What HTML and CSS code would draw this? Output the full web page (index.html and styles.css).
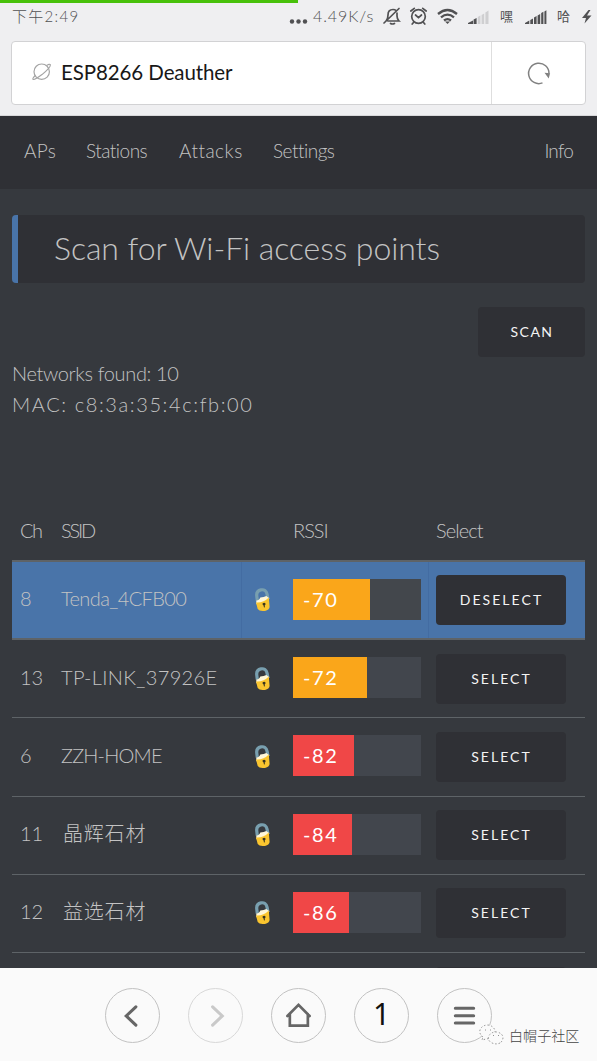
FILE: index.html
```html
<!DOCTYPE html>
<html lang="zh-CN">
<head>
<meta charset="utf-8">
<title>ESP8266 Deauther</title>
<link rel="stylesheet" href="styles.css">
</head>
<body>
<svg class="defs" width="0" height="0">
  <symbol id="lock" viewBox="0 0 18 24">
    <path d="M3.300 12.600 2.800 8.200C2.200 4.200 4 2.500 7 1.900s5.400.8 6.100 4.500l.9 4.600" fill="none" stroke="#789faf" stroke-width="3.200"/>
    <path d="M2.300 12.500q3-.1 4-3.100 3.700-.5 6-1.500l3 2.300-1 3-12 3z" fill="#fff7d8"/>
    <path d="M2 14.500q7.500.5 12.800-5l.8 9.500q-.3 3-4.600 3.900-5.500.9-7.300-1.900z" fill="#fac52f"/>
    <path d="M8.500 15.500q2-1.300 3 .1.400 1.200-.8 1.800l.2 2-1-.2-.3-1.700q-1.200-.7-1.100-2z" fill="#37331f"/>
  </symbol>
</svg>
<div class="progress"></div>
<header class="browser">
  <div class="status">
    <span class="clock">下午2:49</span>
    <span class="speed">4.49K/s</span>
    <svg class="status-icons" viewBox="280 0 317 34" width="317" height="34">
      <g fill="#515153"><circle cx="292" cy="21.500" r="2.200"/><circle cx="298.500" cy="21.500" r="2.200"/><circle cx="305" cy="21.500" r="2.200"/></g>
      <g fill="none" stroke="#515153" stroke-width="1.700" stroke-linecap="round">
        <path d="M384 23 399 8.500M386 21q2-2 2-6 0-5.500 5-5.500 2 0 3 1M397 13v3q0 3 2 5h-11M390.500 23.500q1.800 1 4 0"/>
        <circle cx="418.500" cy="16.500" r="6.800"/><path d="m415.500 15 3 2.700 3-2.700M410.800 11l3.500-2.700M426.200 11l-3.500-2.700M413.500 22.500l-1.300 1.500M423.500 22.500l1.300 1.500"/>
      </g>
      <g fill="none" stroke="#515153" stroke-width="2.300"><path d="M438 14q9.500-8 19 0M441 17.300q6.500-5.400 13 0M444 20.500q3.500-2.800 7 0"/></g>
      <path d="m445 21.500h5l-2.500 2.500z" fill="#515153"/>
      <g fill="#515153"><path d="M468 24v-1l5-2.500V24zM473.600 19.500l3-1.500v6h-3z"/></g>
      <g fill="#cfcfd1"><path d="M477.800 17l2.600-1.500V24h-2.600zM481.600 15l2.600-1.500V24h-2.600zM485.400 12.500l3.100-2V24h-3.100z"/></g>
      <g fill="#515153"><path d="M525 24v-1l4.300-2.500V24zM530.300 20l2.700-1.500V24h-2.700zM534 17.500l2.600-1.500v8H534zM537.600 15.500l2.600-1.500v10h-2.600zM541.200 13l2.200-1.300V24h-2.200zM544.400 11.500l2-1.300V24h-2zM588.500 10l-6.500 8h4l-1.500 5.500 7-8h-4.500l3.500-5.500z"/></g>
    </svg>
    <span class="sim sim-one">嘿</span>
    <span class="sim sim-two">哈</span>
  </div>
  <div class="urlbar">
    <div class="address">
      <svg width="20" height="20" viewBox="0 0 20 20" fill="none" stroke="#a4a4a4" stroke-width="1.200"><circle cx="9.700" cy="9.700" r="7.700"/><path d="M3.300 13.500Q.2 16.300 1 17.300q1.500 1 9-4.700 9-7.500 8.300-9.900-.8-1.200-3.700.8"/></svg>
      <span class="page-title">ESP8266 Deauther</span>
    </div>
    <div class="reload">
      <svg width="26" height="26" viewBox="0 0 26 26"><path d="M16.500 22.900A10.200 10.200 0 1 1 23 13.500" fill="none" stroke="#818181" stroke-width="1.500"/><path d="m18.500 12.800 5.600.4-1.400 5.300z" fill="#818181"/></svg>
    </div>
  </div>
</header>
<nav class="nav">
  <a class="n1">APs</a><a class="n2">Stations</a><a class="n3">Attacks</a><a class="n4">Settings</a><a class="info">Info</a>
</nav>
<main class="content">
  <h1><span>Scan for Wi-Fi access points</span></h1>
  <div class="scan-row"><button class="btn scan">SCAN</button></div>
  <div class="summary"><div class="found">Networks found: 10</div><div class="mac">MAC: c8:3a:35:4c:fb:00</div></div>
  <section class="table">
    <div class="row head"><span class="h-ch">Ch</span><span class="h-ssid">SSID</span><span></span><span class="h-rssi">RSSI</span><span class="h-select">Select</span></div>
    <div class="row selected"><span class="ch">8</span><span class="s1">Tenda_4CFB00</span><svg class="lock"><use href="#lock"/></svg><div class="meter"><div class="level warn" style="width:60%">-70</div></div><button class="btn deselect">DESELECT</button></div>
    <div class="row"><span class="ch">13</span><span class="s2">TP-LINK_37926E</span><svg class="lock"><use href="#lock"/></svg><div class="meter"><div class="level warn" style="width:58%">-72</div></div><button class="btn">SELECT</button></div>
    <div class="row"><span class="ch">6</span><span class="s3">ZZH-HOME</span><svg class="lock"><use href="#lock"/></svg><div class="meter"><div class="level weak" style="width:48%">-82</div></div><button class="btn">SELECT</button></div>
    <div class="row"><span class="ch">11</span><span class="cjk">晶辉石材</span><svg class="lock"><use href="#lock"/></svg><div class="meter"><div class="level weak" style="width:46%">-84</div></div><button class="btn">SELECT</button></div>
    <div class="row"><span class="ch">12</span><span class="cjk">益选石材</span><svg class="lock"><use href="#lock"/></svg><div class="meter"><div class="level weak" style="width:44%">-86</div></div><button class="btn">SELECT</button></div>
    <div class="row"><span></span><span></span><span></span><span></span><button class="btn" aria-label="Select"></button></div>
  </section>
</main>
<footer class="toolbar">
  <div class="circle"><svg viewBox="0 0 55 55"><path d="M31 18.500 21 28l10 9.500"/></svg></div>
  <div class="circle disabled"><svg viewBox="0 0 55 55"><path d="m24.500 18.500 10 9.500-10 9.500"/></svg></div>
  <div class="circle"><svg viewBox="0 0 55 55"><path class="thin" d="m16 28 11.500-11.500L39 28M18.500 26v12h18.700V26"/></svg></div>
  <div class="circle tabs">1</div>
  <div class="circle"><svg viewBox="0 0 55 55"><path d="M18 20h19M18 27.700h19M18 35.300h19"/></svg></div>
  <div class="watermark">
    <svg width="26" height="22" viewBox="0 0 26 22" fill="#fafafa" stroke="#777" stroke-width=".8" stroke-dasharray="1.500 2"><path d="M4 13Q0 10 1 6q2-5 8-5 6 1 7 6 0 7-9 8l-4 1z"/><path d="M21 19q-4 2-9-.5-4-3-2-7 3-4 8-3.500 6 1.500 6 6-1 4-3 5z"/><path d="M6 6h1M11 6h1M14 11.500h1M19 11.500h1"/></svg>
    <span>白帽子社区</span>
  </div>
</footer>
</body>
</html>
```
FILE: styles.css
```css
* { box-sizing: border-box; }
body {
  margin: 0;
  width: 597px;
  height: 1061px;
  overflow: hidden;
  display: flex;
  flex-direction: column;
  background: #36393e;
  color: #c3c3c3;
  font: 300 20px/31px Lato, "Noto Sans CJK SC", sans-serif;
  font-variant-ligatures: none;
  white-space: nowrap;
}
.defs { position: absolute; }
.progress { position: absolute; top: 0; left: 0; width: 298px; height: 3px; background: #48c10a; }
.browser { flex: none; height: 116px; background: #efeff1; border-bottom: 1px solid #d8d8da; }
.status { position: relative; height: 41px; color: #515153; font-size: 16px; font-weight: 400; line-height: 32px; }
.clock { margin-left: 12px; font-size: 15px; font-weight: 300; letter-spacing: 1.300px; }
.speed { position: absolute; left: 313px; top: 0; letter-spacing: .9px; font-weight: 300; }
.status-icons { position: absolute; left: 280px; top: 0; }
.sim { position: absolute; top: 0; font-size: 13px; }
.sim-one { left: 500px; }
.sim-two { left: 557px; }
.urlbar { display: flex; width: 575px; height: 64px; margin-left: 11px; background: #fff; border: 1px solid #d2d2d4; border-radius: 4px; }
.address { flex: 1; display: flex; align-items: center; gap: 9px; padding: 0 0 2px 20px; }
.page-title { color: #181818; font-size: 20.500px; font-weight: 400; letter-spacing: -.1px; }
.reload { width: 94px; border-left: 1px solid #dedede; display: grid; place-items: center; }
.nav { flex: none; height: 73px; display: flex; align-items: center; padding: 0 24px 4px; background: #2f3035; }
.nav a { font-size: 19px; }
.n1 { width: 62px; letter-spacing: .3px; }
.n2 { width: 93px; letter-spacing: -.5px; }
.n3 { width: 94px; letter-spacing: .5px; }
.n4 { letter-spacing: -.5px; }
.nav .info { margin-left: auto; letter-spacing: -.8px; }
.content { flex: 1; min-height: 0; overflow: hidden; padding: 26px 12px 0; }
h1 { display: flex; align-items: center; height: 68px; margin: 0; padding: 0 0 4px 36px; border-left: 6px solid #4974a9; border-radius: 4px; background: #2f3035; font-size: 32px; font-weight: 300; letter-spacing: -.07px; }
.scan-row { display: flex; justify-content: flex-end; margin-top: 24px; }
.btn { width: 130px; height: 50px; padding: 0 0 0 1px; border: 0; border-radius: 4px; background: #2f3035; color: #f4f4f4; font: 400 14px/50px Lato, sans-serif; letter-spacing: 2.050px; }
.scan { width: 107px; letter-spacing: 1.500px; }
.summary { margin-top: 1px; }
.found { letter-spacing: -.35px; }
.mac { letter-spacing: 1.600px; }
.table { margin-top: 82px; }
.row { display: grid; grid-template-columns: 41px 188px 44px 143px 1fr; align-items: center; height: 78.200px; padding-left: 8px; border-bottom: 1.500px solid #5e6367; }
.row > span { padding-bottom: 3px; }
.head { height: 60px; border-bottom-width: 2px; }
.head > span { padding-bottom: 1px; }
.h-ch { letter-spacing: -1.500px; }
.h-ssid { letter-spacing: -2.200px; }
.h-rssi { letter-spacing: -1px; }
.h-select { letter-spacing: -.9px; }
.s1 { letter-spacing: -.6px; }
.s2 { letter-spacing: .35px; }
.s3 { letter-spacing: -.8px; }
.selected { background: linear-gradient(90deg, transparent 229px, #436ca2 229px 230px, transparent 230px 416px, #436ca2 416px 417px, transparent 417px) #4974a9; border-bottom-width: 2px; }
.lock { width: 18px; height: 24px; margin-left: 5px; }
.meter { width: 128px; height: 41px; margin-bottom: 2px; background: #42464d; }
.selected .meter { background: #43474c; }
.level { height: 41px; padding-left: 10px; color: #fff; line-height: 40px; letter-spacing: 1.600px; font-weight: 400; }
.warn { background: #faa61a; }
.weak { background: #f04747; }
.cjk { padding-left: 2px; letter-spacing: .8px; }
.toolbar { position: relative; flex: none; height: 93px; display: flex; gap: 28px; padding: 20px 0 0 105px; background: #fafafa; }
.circle { width: 55px; height: 55px; border: 1px solid #c2c2c2; border-radius: 50%; color: #111; }
.circle svg { display: block; width: 53px; height: 53px; fill: none; stroke: #666; stroke-width: 3.200; stroke-linecap: round; }
.circle .thin { stroke-width: 2.800; }
.disabled { border-color: #d8d8d8; }
.disabled svg { stroke: #c9c9c9; }
.tabs { text-align: center; font: 400 30px/50px "Noto Sans", sans-serif; }
.watermark { position: absolute; left: 479px; top: 55px; display: flex; align-items: center; gap: 4px; color: #444; font: 300 14.100px/24px "Noto Sans CJK SC", sans-serif; }
```
